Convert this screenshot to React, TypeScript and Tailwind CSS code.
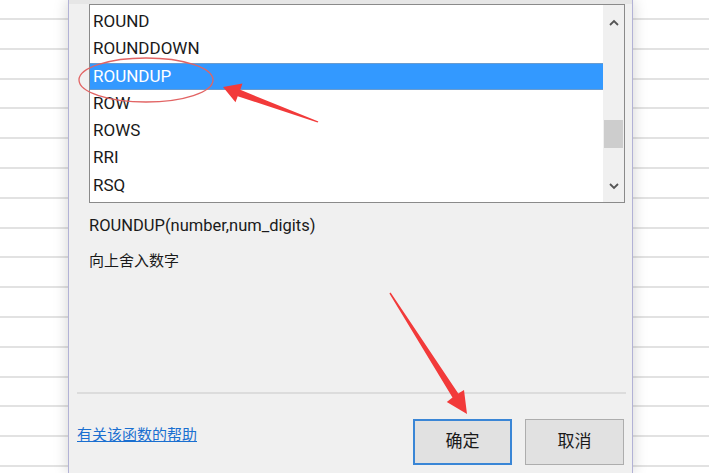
const functions = ["ROUND", "ROUNDDOWN", "ROUNDUP", "ROW", "ROWS", "RRI", "RSQ"];
const gridRows = Array.from({ length: 15 }, (_, i) => i);

const GridPane = ({ className }: { className: string }) => (
  <div className={`flex flex-col bg-white ${className}`}>
    <div className="h-[20px] shrink-0 border-b-2 border-[#e2e2e2]" />
    {gridRows.map((r) => (
      <div key={r} className="h-[29.8px] shrink-0 border-b-2 border-[#e2e2e2]" />
    ))}
  </div>
);

const Chevron = ({ up }: { up?: boolean }) => (
  <svg width="10" height="7" viewBox="0 0 10 7" className="text-[#555]">
    <path d={up ? "M1 6L5 2L9 6" : "M1 1L5 5L9 1"} fill="none" stroke="currentColor" strokeWidth="1.8" />
  </svg>
);

const App = () => (
  <div className="relative flex h-[473px] w-[709px] overflow-hidden bg-white font-['Roboto','Noto_Sans_CJK_SC',sans-serif] text-[#1a1a1a]">
    <GridPane className="w-[68px] shrink-0" />

    <div className="relative z-10 flex w-[565px] shrink-0 flex-col border-x border-[#b2b2d6] bg-[#f0f0f0] shadow-[0_0_14px_rgba(0,0,0,0.18)]">
      <div className="h-[4px] bg-[#e6e6e6]" />

      {/* function list */}
      <div className="ml-[20px] flex h-[199px] w-[536px] border border-[#8a8a8a] bg-white">
        <ul className="flex-1 pt-[3px]">
          {functions.map((f) => (
            <li
              key={f}
              className={`flex h-[27.3px] items-center pl-[3px] text-[17px] ${
                f === "ROUNDUP" ? "border-y border-[#6a9ccf] bg-[#3399ff] text-white" : ""
              }`}
            >
              {f}
            </li>
          ))}
        </ul>
        <div className="flex w-[21px] flex-col bg-[#f0f0f0]">
          <div className="flex h-[34px] items-center justify-center">
            <Chevron up />
          </div>
          <div className="h-[81px]" />
          <div className="mx-[1px] h-[28px] bg-[#cdcdcd]" />
          <div className="flex-1" />
          <div className="flex h-[32px] items-center justify-center">
            <Chevron />
          </div>
        </div>
      </div>

      <p className="ml-[20px] mt-[13px] h-[20px] text-[16.5px] leading-[20px]">ROUNDUP(number,num_digits)</p>
      <p className="ml-[20px] mt-[15px] h-[20px] text-[15px] leading-[20px]">向上舍入数字</p>

      <div className="ml-[8px] mr-[6px] mt-[121px] h-[2px] bg-[#dcdcdc]" />

      <div className="mt-[25px] flex items-start pl-[8px] pr-[8px]">
        <a href="#" className="mt-[6px] text-[15px] leading-[20px] text-[#1a6fd0] underline">
          有关该函数的帮助
        </a>
        <div className="ml-auto flex gap-[13px]">
          <button className="h-[46px] w-[99px] border-2 border-[#3a86d6] bg-[#e1e1e1] text-[17px]">确定</button>
          <button className="h-[46px] w-[99px] border border-[#adadad] bg-[#e1e1e1] text-[17px]">取消</button>
        </div>
      </div>
    </div>

    <GridPane className="flex-1" />

    {/* annotations */}
    <svg className="pointer-events-none absolute inset-0 z-20" width="709" height="473" viewBox="0 0 709 473">
      <ellipse cx="146" cy="80" rx="67" ry="22" fill="none" stroke="#e26464" strokeWidth="1.3" />
      <polygon
        points="223,87 242.5,83.5 240.3,89.8 318.4,121.6 317.6,122.4 237.7,96.3 235.5,102.3"
        fill="#f23a3a"
      />
      <polygon
        points="467,414 464,390 458.3,393.6 390.6,292.6 389.4,293.4 452.5,397.4 446.8,402"
        fill="#f23a3a"
      />
    </svg>
  </div>
);

export default App;
